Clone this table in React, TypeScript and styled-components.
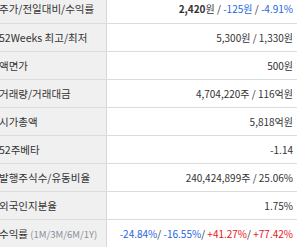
import React from 'react';
import styled, { createGlobalStyle, css } from 'styled-components';

type Tone = 'up' | 'down' | 'plain';

const GlobalStyle = createGlobalStyle`
	html, body {
		margin: 0;
		padding: 0;
		background: #ffffff;
	}
	body {
		font-family: 'Noto Sans CJK KR', 'Noto Sans', sans-serif;
	}
`;

export default function App() {
	return (
		<>
			<GlobalStyle />
			<Frame>
				<Table>
					<tbody>
						<Row>
							<Label>주가/전일대비/수익률</Label>
							<Value>
								<Strong>2,420</Strong>원 <Sep>/</Sep>{' '}
								<Num $tone="down">-125원</Num> <Sep>/</Sep>{' '}
								<Num $tone="down">-4.91%</Num>
							</Value>
						</Row>
						<Row>
							<Label>52Weeks 최고/최저</Label>
							<Value>5,300원 / 1,330원</Value>
						</Row>
						<Row>
							<Label>액면가</Label>
							<Value>500원</Value>
						</Row>
						<Row>
							<Label>거래량/거래대금</Label>
							<Value>4,704,220주 / 116억원</Value>
						</Row>
						<Row>
							<Label>시가총액</Label>
							<Value>5,818억원</Value>
						</Row>
						<Row>
							<Label>52주베타</Label>
							<Value>-1.14</Value>
						</Row>
						<Row>
							<Label>발행주식수/유동비율</Label>
							<Value>240,424,899주 / 25.06%</Value>
						</Row>
						<Row>
							<Label>외국인지분율</Label>
							<Value>1.75%</Value>
						</Row>
						<Row>
							<Label>
								수익률 <Hint>(1M/3M/6M/1Y)</Hint>
							</Label>
							<Value>
								<Num $tone="down">-24.84%</Num>/ <Num $tone="down">-16.55%</Num>/{' '}
								<Num $tone="up">+41.27%</Num>/ <Num $tone="up">+77.42%</Num>
							</Value>
						</Row>
					</tbody>
				</Table>
			</Frame>
		</>
	);
}

const Frame = styled.div`
	width: 297px;
	height: 247px;
	overflow: hidden;
`;

const Table = styled.table`
	margin: -5px 0 0 -11px;
	width: 308px;
	border-collapse: collapse;
	table-layout: fixed;
	font-size: 10px;
	color: #333333;
`;

const Row = styled.tr`
	height: 28px;
	border-bottom: 1px solid #dcdcdc;
`;

const Label = styled.th`
	width: 117px;
	box-sizing: border-box;
	padding: 0 0 0 10px;
	background: #f0f0f0;
	border-right: 1px solid #d8d8d8;
	text-align: left;
	font-size: 10.5px;
	font-weight: 400;
	white-space: nowrap;
	overflow: hidden;
	color: #333333;
`;

const Value = styled.td`
	padding: 0 4px 0 0;
	text-align: right;
	white-space: nowrap;
`;

const Strong = styled.b`
	font-weight: 700;
`;

const Sep = styled.span`
	color: #333333;
`;

const Num = styled.span<{ $tone: Tone }>(
	({ $tone }) => css`
		color: ${$tone === 'up' ? '#e8161b' : $tone === 'down' ? '#2766e0' : '#333333'};
	`,
);

const Hint = styled.span`
	font-size: 9.5px;
	color: #8a8f99;
`;
